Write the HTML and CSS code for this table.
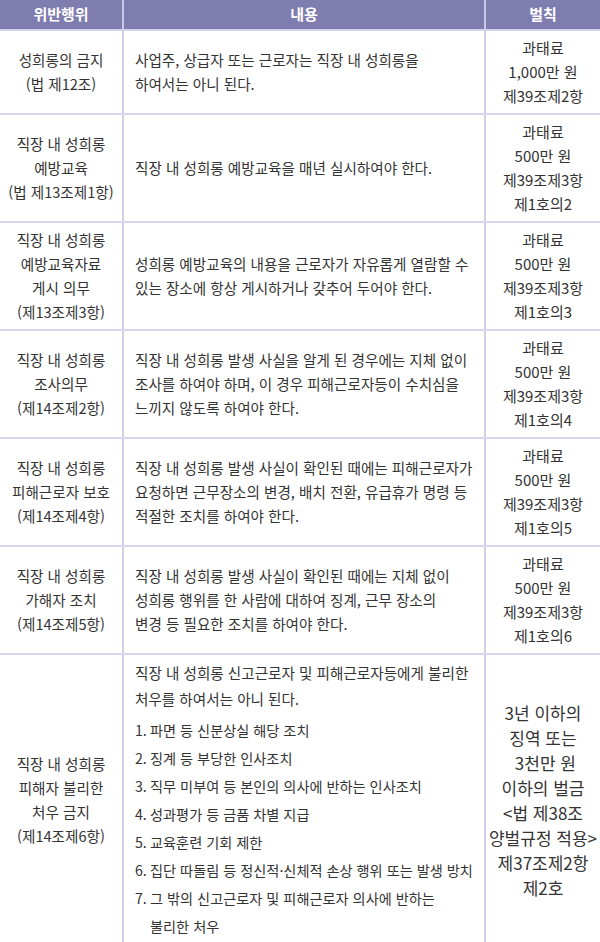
FILE: index.html
```
<!DOCTYPE html>
<html lang="ko">
<head>
<meta charset="utf-8">
<title>직장 내 성희롱 관련 벌칙</title>
<link rel="stylesheet" href="styles.css">
</head>
<body>
<table class="law">
  <colgroup>
    <col class="c1"><col class="c2"><col class="c3">
  </colgroup>
  <thead>
    <tr><th>위반행위</th><th>내용</th><th>벌칙</th></tr>
  </thead>
  <tbody>
    <tr>
      <td class="act">성희롱의 금지<br>(법 제12조)</td>
      <td class="desc">사업주, 상급자 또는 근로자는 직장 내 성희롱을<br>하여서는 아니 된다.</td>
      <td class="pen">과태료<br>1,000만 원<br>제39조제2항</td>
    </tr>
    <tr>
      <td class="act">직장 내 성희롱<br>예방교육<br>(법 제13조제1항)</td>
      <td class="desc">직장 내 성희롱 예방교육을 매년 실시하여야 한다.</td>
      <td class="pen">과태료<br>500만 원<br>제39조제3항<br>제1호의2</td>
    </tr>
    <tr>
      <td class="act">직장 내 성희롱<br>예방교육자료<br>게시 의무<br>(제13조제3항)</td>
      <td class="desc">성희롱 예방교육의 내용을 근로자가 자유롭게 열람할 수<br>있는 장소에 항상 게시하거나 갖추어 두어야 한다.</td>
      <td class="pen">과태료<br>500만 원<br>제39조제3항<br>제1호의3</td>
    </tr>
    <tr>
      <td class="act">직장 내 성희롱<br>조사의무<br>(제14조제2항)</td>
      <td class="desc">직장 내 성희롱 발생 사실을 알게 된 경우에는 지체 없이<br>조사를 하여야 하며, 이 경우 피해근로자등이 수치심을<br>느끼지 않도록 하여야 한다.</td>
      <td class="pen">과태료<br>500만 원<br>제39조제3항<br>제1호의4</td>
    </tr>
    <tr>
      <td class="act">직장 내 성희롱<br>피해근로자 보호<br>(제14조제4항)</td>
      <td class="desc">직장 내 성희롱 발생 사실이 확인된 때에는 피해근로자가<br>요청하면 근무장소의 변경, 배치 전환, 유급휴가 명령 등<br>적절한 조치를 하여야 한다.</td>
      <td class="pen">과태료<br>500만 원<br>제39조제3항<br>제1호의5</td>
    </tr>
    <tr>
      <td class="act">직장 내 성희롱<br>가해자 조치<br>(제14조제5항)</td>
      <td class="desc">직장 내 성희롱 발생 사실이 확인된 때에는 지체 없이<br>성희롱 행위를 한 사람에 대하여 징계, 근무 장소의<br>변경 등 필요한 조치를 하여야 한다.</td>
      <td class="pen">과태료<br>500만 원<br>제39조제3항<br>제1호의6</td>
    </tr>
    <tr class="last">
      <td class="act">직장 내 성희롱<br>피해자 불리한<br>처우 금지<br>(제14조제6항)</td>
      <td class="desc">
        <p class="intro">직장 내 성희롱 신고근로자 및 피해근로자등에게 불리한<br>처우를 하여서는 아니 된다.</p>
        <ol class="items">
          <li><span class="num">1.</span><span>파면 등 신분상실 해당 조치</span></li>
          <li><span class="num">2.</span><span>징계 등 부당한 인사조치</span></li>
          <li><span class="num">3.</span><span>직무 미부여 등 본인의 의사에 반하는 인사조치</span></li>
          <li><span class="num">4.</span><span>성과평가 등 금품 차별 지급</span></li>
          <li><span class="num">5.</span><span>교육훈련 기회 제한</span></li>
          <li><span class="num">6.</span><span>집단 따돌림 등 정신적·신체적 손상 행위 또는 발생 방치</span></li>
          <li><span class="num">7.</span><span>그 밖의 신고근로자 및 피해근로자 의사에 반하는<br>불리한 처우</span></li>
        </ol>
      </td>
      <td class="pen big">3년 이하의<br>징역 또는<br>&nbsp;3천만 원<br>이하의 벌금<br>&lt;법 제38조<br>양벌규정 적용&gt;<br>제37조제2항<br>제2호</td>
    </tr>
  </tbody>
</table>
</body>
</html>
```
FILE: styles.css
```
html, body {
  margin: 0;
  padding: 0;
  background: #ffffff;
}
body {
  font-family: "Noto Sans CJK KR", "Noto Sans", sans-serif;
  color: #333333;
  font-size: 14.6px;
  line-height: 24px;
}
.law {
  width: 600px;
  border-collapse: collapse;
  table-layout: fixed;
}
.c1 { width: 123px; }
.c2 { width: 362px; }
.c3 { width: 115px; }
.law th {
  background: #7f7db0;
  color: #ffffff;
  font-size: 15px;
  font-weight: 700;
  line-height: 24px;
  padding: 2px 0 3px;
  text-align: center;
  border-left: 2px solid #c9c8e6;
  border-bottom: 2px solid #d3d2ec;
}
.law th:first-child { border-left: none; }
.law td {
  padding: 5px 0;
  vertical-align: middle;
  border-left: 2px solid #cfcfeb;
  border-bottom: 2px solid #d6d6ef;
}
.law td:first-child { border-left: none; }
.act { text-align: center; }
.desc {
  text-align: left;
  padding-left: 11px !important;
  padding-right: 4px !important;
}
.pen {
  text-align: center;
  font-size: 15px;
}
.last td { border-bottom: none; }
.last .desc {
  vertical-align: top;
  padding-top: 5px !important;
}
.intro {
  margin: 0;
  line-height: 26px;
}
.items {
  list-style: none;
  margin: 4px 0 0;
  padding: 0;
  font-size: 14.2px;
  line-height: 28px;
}
.items li {
  display: flex;
  white-space: nowrap;
}
.num {
  flex: 0 0 15px;
}
.pen.big {
  font-size: 17px;
  line-height: 25px;
}
```
